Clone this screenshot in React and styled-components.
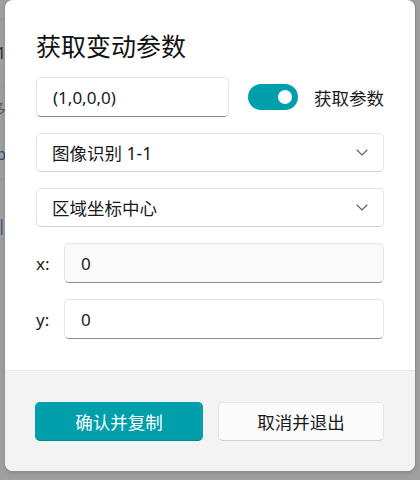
import React from 'react';
import styled, { createGlobalStyle } from 'styled-components';

const colors = {
  accent: '#009fab',
  accentEdge: '#00868f',
  text: '#1a1a1a',
  border: '#e5e5e5',
  fieldBottom: '#8a8a8a',
  backdrop: '#9f9f9f',
  footer: '#f3f3f3',
};

const GlobalStyle = createGlobalStyle`
  html, body {
    margin: 0;
    height: 100%;
    background: ${colors.backdrop};
    font-family: "Noto Sans", "Noto Sans CJK SC", sans-serif;
    overflow: hidden;
  }
  #root {
    height: 100%;
  }
`;

const Page = styled.div`
  position: relative;
  height: 480px;
  width: 420px;
  overflow: hidden;
`;

const Backdrop = styled.div`
  display: flex;
  flex-direction: column;
  width: 6px;
  overflow: hidden;
  color: #2a2a2a;
  font-size: 16px;
`;

const BackdropRow = styled.div`
  height: ${props => props.h}px;
  display: flex;
  align-items: center;
  justify-content: flex-end;
  border-bottom: ${props => (props.line ? '1px solid #939393' : 'none')};
  color: ${props => props.tone || '#2a2a2a'};
  white-space: nowrap;
`;

const Dialog = styled.div`
  position: absolute;
  left: 5px;
  top: 0;
  width: 410px;
  height: 471px;
  background: #fff;
  border-radius: 8px;
  box-shadow: 1px 0 0 #8c8c8c, 0 2px 4px rgba(0, 0, 0, 0.15);
  display: flex;
  flex-direction: column;
  overflow: hidden;
`;

const Body = styled.div`
  flex: 1;
  display: flex;
  flex-direction: column;
  gap: 16px;
  padding: 31px 31px 31px 31px;
`;

const Title = styled.h1`
  margin: 0;
  font-size: 25px;
  line-height: 30px;
  font-weight: 400;
  color: #111;
`;

const Row = styled.div`
  display: flex;
  align-items: center;
  gap: ${props => props.gap || 0}px;
`;

const TextBox = styled.div`
  flex: ${props => (props.w ? 'none' : 1)};
  width: ${props => (props.w ? `${props.w}px` : 'auto')};
  box-sizing: border-box;
  height: 40px;
  display: flex;
  align-items: center;
  padding: 0 16px;
  border: 1px solid ${colors.border};
  border-bottom-color: ${colors.fieldBottom};
  border-radius: 5px;
  background: ${props => (props.dim ? '#fafafa' : '#fff')};
  font-size: 17px;
  color: ${colors.text};
`;

const Toggle = styled.div`
  width: 52px;
  height: 26px;
  border-radius: 13px;
  background: ${colors.accent};
  display: flex;
  align-items: center;
  justify-content: flex-end;
  padding: 0 6px;
  box-sizing: border-box;
  margin-left: 19px;
`;

const Knob = styled.div`
  width: 14px;
  height: 14px;
  border-radius: 50%;
  background: #fff;
`;

const ToggleLabel = styled.span`
  margin-left: 16px;
  font-size: 17.5px;
  color: ${colors.text};
  white-space: nowrap;
`;

const Select = styled.div`
  box-sizing: border-box;
  height: 39px;
  display: flex;
  align-items: center;
  justify-content: space-between;
  padding: 0 15px 0 15px;
  border: 1px solid ${colors.border};
  border-bottom-color: #d2d2d2;
  border-radius: 5px;
  background: #fff;
  font-size: 17.5px;
  color: ${colors.text};
`;

const FieldLabel = styled.span`
  width: 28px;
  flex: none;
  font-size: 17px;
  color: ${colors.text};
`;

const Footer = styled.div`
  height: 101px;
  box-sizing: border-box;
  background: ${colors.footer};
  border-top: 1px solid #e8e8e8;
  display: flex;
  gap: 15px;
  padding: 31px 31px 0 30px;
`;

const Button = styled.button`
  box-sizing: border-box;
  height: 39px;
  border-radius: 5px;
  font-family: inherit;
  font-size: 17.5px;
  cursor: pointer;
  width: ${props => props.w}px;
  background: ${props => (props.primary ? colors.accent : '#fbfbfb')};
  color: ${props => (props.primary ? '#fff' : colors.text)};
  border: 1px solid ${props => (props.primary ? colors.accent : colors.border)};
  border-bottom-color: ${props => (props.primary ? colors.accentEdge : '#cfcfcf')};
`;

const Chevron = () => (
  <svg width="12" height="7" viewBox="0 0 12 7" fill="none">
    <polyline points="0.7,0.8 6,6 11.3,0.8" stroke="#606060" strokeWidth="1.2" />
  </svg>
);

const App = () => (
  <Page>
    <GlobalStyle />
    <Backdrop>
      <BackdropRow h={19} line />
      <BackdropRow h={66} line>1</BackdropRow>
      <BackdropRow h={42} tone="#4d5a6b">多</BackdropRow>
      <BackdropRow h={50} tone="#2c4a7a" line>b</BackdropRow>
      <BackdropRow h={90} tone="#2c4a7a">e|</BackdropRow>
    </Backdrop>
    <Dialog>
      <Body>
        <Title>获取变动参数</Title>
        <Row>
          <TextBox w={193}>(1,0,0,0)</TextBox>
          <Toggle>
            <Knob />
          </Toggle>
          <ToggleLabel>获取参数</ToggleLabel>
        </Row>
        <Select>
          <span>图像识别 1-1</span>
          <Chevron />
        </Select>
        <Select>
          <span>区域坐标中心</span>
          <Chevron />
        </Select>
        <Row>
          <FieldLabel>x:</FieldLabel>
          <TextBox dim>0</TextBox>
        </Row>
        <Row>
          <FieldLabel>y:</FieldLabel>
          <TextBox>0</TextBox>
        </Row>
      </Body>
      <Footer>
        <Button primary w={168}>确认并复制</Button>
        <Button w={166}>取消并退出</Button>
      </Footer>
    </Dialog>
  </Page>
);

export default App;
